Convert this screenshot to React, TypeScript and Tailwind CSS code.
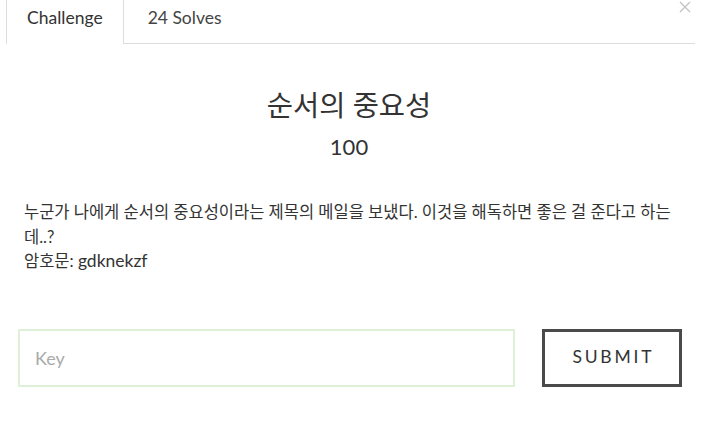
const font = "font-['Lato','Noto_Sans_CJK_KR',sans-serif]";

const App = () => {
  return (
    <div className={`relative w-[720px] h-[424px] bg-white text-[#333] ${font}`}>
      {/* Close */}
      <button className="absolute left-[679px] top-[1px] text-[#c4c4c4]" aria-label="Close">
        <svg width="12" height="12" viewBox="0 0 12 12" fill="none" stroke="currentColor" strokeWidth="1.4">
          <path d="M1 1L11 11M11 1L1 11" />
        </svg>
      </button>

      {/* Tabs */}
      <div className="ml-[6px] mr-[25px] flex border-b border-[#ddd] h-[44px]">
        <div className="px-5 pt-[6px] h-[44px] -mb-px bg-white border-x border-[#ddd] text-[17.5px] leading-6">
          Challenge
        </div>
        <div className="px-6 pt-[6px] text-[17.5px] leading-6 text-[#444]">24 Solves</div>
      </div>

      {/* Body */}
      <div className="w-[698px] px-6">
        <h2 className="mt-[43px] text-center text-[28.5px] leading-9 font-normal">순서의 중요성</h2>
        <h4 className="mt-[10px] text-center text-[22px] leading-7">100</h4>

        <p className="mt-[39px] text-[16.5px] leading-[24.5px]">
          누군가 나에게 순서의 중요성이라는 제목의 메일을 보냈다. 이것을 해독하면 좋은 걸 준다고 하는 데..?
          <br />
          암호문: <span className="text-[17.5px]">gdknekzf</span>
        </p>
      </div>

      <div className="mt-[55px] ml-[18px] flex items-center gap-[27px]">
        <input
          placeholder="Key"
          className="shrink-0 w-[497px] h-[58px] border-2 border-[#dff0d8] px-[15px] text-[18px] placeholder:text-[#aaa] outline-none"
        />
        <button className="shrink-0 w-[140px] h-[58px] border-[3px] border-[#4a4a4a] text-[17.5px] tracking-[0.16em] pl-[0.16em] text-[#333]">
          SUBMIT
        </button>
      </div>
    </div>
  );
};

export default App;
